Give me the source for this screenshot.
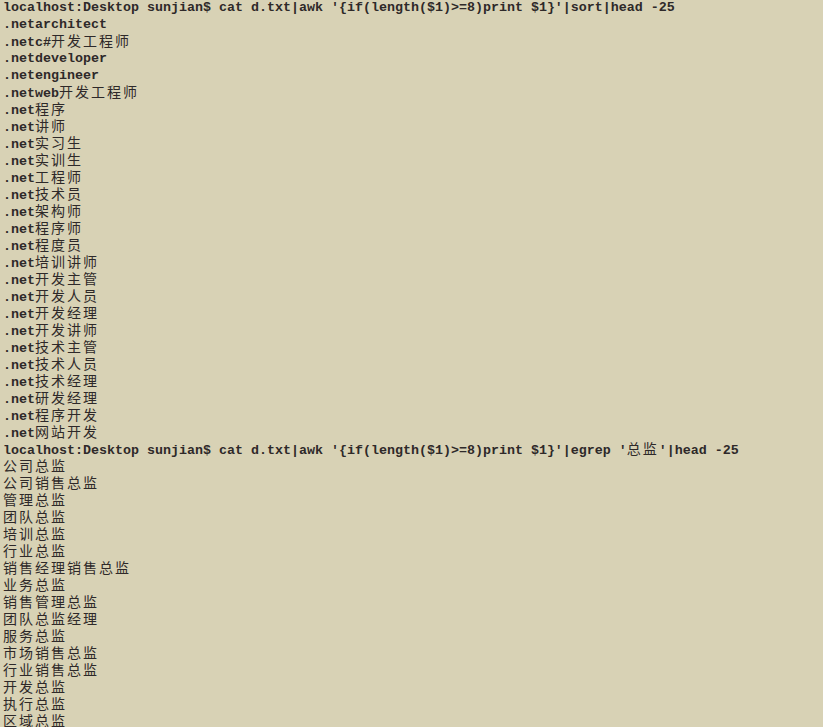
const lines = [
  "localhost:Desktop sunjian$ cat d.txt|awk '{if(length($1)>=8)print $1}'|sort|head -25",
  ".netarchitect",
  ".netc#开发工程师",
  ".netdeveloper",
  ".netengineer",
  ".netweb开发工程师",
  ".net程序",
  ".net讲师",
  ".net实习生",
  ".net实训生",
  ".net工程师",
  ".net技术员",
  ".net架构师",
  ".net程序师",
  ".net程度员",
  ".net培训讲师",
  ".net开发主管",
  ".net开发人员",
  ".net开发经理",
  ".net开发讲师",
  ".net技术主管",
  ".net技术人员",
  ".net技术经理",
  ".net研发经理",
  ".net程序开发",
  ".net网站开发",
  "localhost:Desktop sunjian$ cat d.txt|awk '{if(length($1)>=8)print $1}'|egrep '总监'|head -25",
  "公司总监",
  "公司销售总监",
  "管理总监",
  "团队总监",
  "培训总监",
  "行业总监",
  "销售经理销售总监",
  "业务总监",
  "销售管理总监",
  "团队总监经理",
  "服务总监",
  "市场销售总监",
  "行业销售总监",
  "开发总监",
  "执行总监",
  "区域总监",
];

// split a line into ascii runs and runs of wide chars
function split(line: string) {
  const parts: { wide: boolean; text: string }[] = [];
  for (const ch of line) {
    const wide = ch.charCodeAt(0) > 0x2e80;
    const last = parts[parts.length - 1];
    if (last && last.wide === wide) last.text += ch;
    else parts.push({ wide, text: ch });
  }
  return parts;
}

const Line = ({ text }: { text: string }) => (
  <div className="h-[17px] leading-[17px] whitespace-pre">
    {split(text).map((p, i) =>
      p.wide ? (
        <span
          key={i}
          className="text-[14px] leading-none tracking-[2px] font-normal font-['Noto_Sans_CJK_SC',sans-serif]"
        >
          {p.text}
        </span>
      ) : (
        <span key={i}>{p.text}</span>
      )
    )}
  </div>
);

export default function App() {
  return (
    <div className="w-[823px] h-[728px] overflow-hidden bg-[#d8d2b5] text-[#2e2929] font-['Liberation_Mono',monospace] text-[13.33px] font-bold pl-[3px] -mt-[1px]">
      {lines.map((l, i) => (
        <Line key={i} text={l} />
      ))}
    </div>
  );
}
